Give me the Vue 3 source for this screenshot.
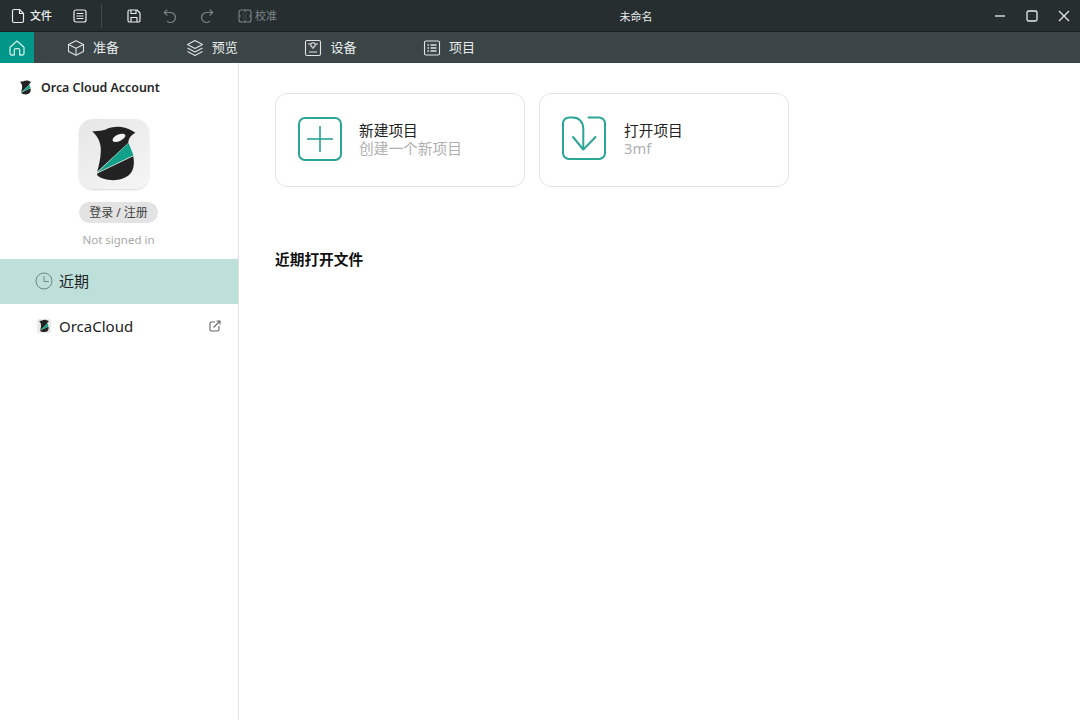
<script setup>
const tabs = [
  { label: '准备', icon: 'cube' },
  { label: '预览', icon: 'layers' },
  { label: '设备', icon: 'device' },
  { label: '项目', icon: 'list' },
]
const orcaTop = 'M277 185 C292 186 305 184 318 180 C330 172 350 170 365 172 C380 174 395 180 408 190 C396 196 388 204 386 221 L292 308 C297 290 303 265 303 245 C304 222 296 202 277 185Z'
const orcaBand = 'M387 221 L402 258 L292 311Z'
const orcaLow = 'M292 313 L401 261 C405 280 404 300 392 314 C378 330 350 336 325 332 C310 329 298 324 292 318Z'
</script>

<template>
  <div class="app">
    <header class="titlebar">
      <div class="tb-left">
        <svg class="ic file-ic" width="16" height="16" viewBox="0 0 16 16" fill="none" stroke="#e8ecec" stroke-width="1.2" stroke-linejoin="round"><path d="M2.5 3a1.5 1.5 0 0 1 1.5-1.5h5.5L13.5 5.500v7.500a1.500 1.500 0 0 1-1.500 1.500H4A1.500 1.500 0 0 1 2.500 13z"/><path d="M9.500 1.500v4h4"/></svg>
        <span class="file-txt">文件</span>
        <svg class="ic menu-ic" width="16" height="16" viewBox="0 0 16 16" fill="none" stroke="#e8ecec" stroke-width="1.2"><rect x="2" y="2" width="12" height="12" rx="2"/><path d="M4.500 5.500h7M4.500 8h7M4.500 10.500h7"/></svg>
        <i class="vsep"></i>
        <svg class="ic save-ic" width="16" height="16" viewBox="0 0 16 16" fill="none" stroke="#e8ecec" stroke-width="1.200" stroke-linejoin="round"><path d="M2 3.500A1.500 1.500 0 0 1 3.500 2h7.500L14 5v7.500a1.500 1.500 0 0 1-1.500 1.500h-9A1.500 1.500 0 0 1 2 12.500z"/><path d="M5 2v3.500h5V2M5 14v-4.500h6V14"/></svg>
        <svg class="ic undo-ic" width="16" height="16" viewBox="0 0 16 16" fill="none" stroke="#7c8486" stroke-width="1.200" stroke-linecap="round" stroke-linejoin="round"><path d="M2.500 4.500h6.500a5 5 0 1 1-3.500 9"/><path d="M5 1.800 2.300 4.500 5 7.200"/></svg>
        <svg class="ic redo-ic" width="16" height="16" viewBox="0 0 16 16" fill="none" stroke="#7c8486" stroke-width="1.200" stroke-linecap="round" stroke-linejoin="round"><path d="M13.500 4.500H7a5 5 0 1 0 3.500 9"/><path d="M11 1.800l2.700 2.700L11 7.200"/></svg>
        <svg class="ic cal-ic" width="14" height="14" viewBox="0 0 14 14" fill="none" stroke="#7c8486" stroke-width="1.100"><rect x="1" y="1" width="12" height="12" rx="2"/><path d="M7 1v2M7 11v2M1 7h2M11 7h2M5 5h.8M8.200 5H9M5 9h.8M8.200 9H9M7 6.500v1"/></svg>
        <span class="cal-txt">校准</span>
      </div>
      <div class="tb-title">未命名</div>
      <div class="tb-right">
        <svg width="12" height="12" viewBox="0 0 12 12" fill="none" stroke="#e8ecec" stroke-width="1.300"><path d="M1 6h10"/></svg>
        <svg width="12" height="12" viewBox="0 0 12 12" fill="none" stroke="#e8ecec" stroke-width="1.300"><rect x="1" y="1" width="10" height="10" rx="1.500"/></svg>
        <svg width="12" height="12" viewBox="0 0 12 12" fill="none" stroke="#e8ecec" stroke-width="1.200"><path d="M1 1l10 10M11 1 1 11"/></svg>
      </div>
    </header>

    <nav class="tabbar">
      <div class="home">
        <svg width="18" height="18" viewBox="0 0 18 18" fill="none" stroke="#cfeee8" stroke-width="1.300" stroke-linejoin="round"><path d="M2 8.300 9 2l7 6.300V14.500A1.500 1.500 0 0 1 14.500 16h-2.800v-5a1.300 1.300 0 0 0-1.300-1.300H7.600A1.300 1.300 0 0 0 6.300 11v5H3.500A1.500 1.500 0 0 1 2 14.500z"/></svg>
      </div>
      <div v-for="t in tabs" :key="t.label" class="tab">
        <svg width="18" height="18" viewBox="0 0 18 18" fill="none" stroke="#dfe3e3" stroke-width="1.100" stroke-linejoin="round">
          <template v-if="t.icon === 'cube'">
            <path d="M9 1.800 16.500 5.500v7L9 16.200 1.500 12.500v-7z"/><path d="M1.500 5.500 9 9.200l7.500-3.700M9 9.200v7"/>
          </template>
          <template v-else-if="t.icon === 'layers'">
            <path d="M9 1.500 16.500 5.500 9 9.500 1.500 5.500z"/><path d="M1.500 9 9 13l7.500-4M1.500 12.500 9 16.500l7.500-4"/>
          </template>
          <template v-else-if="t.icon === 'device'">
            <rect x="1.500" y="1.500" width="15" height="15" rx="1.500"/><circle cx="9" cy="6" r="2.200"/><path d="M4 5h2.800M11.200 5H14M9 8.200v1.800M5 13h8"/>
          </template>
          <template v-else>
            <rect x="1.500" y="2" width="15" height="14" rx="1.500"/><path stroke-width="1.400" d="M4.500 6h1.500M7.500 6h6M4.500 9h1.500M7.500 9h6M4.500 12h1.500M7.500 12h6"/>
          </template>
        </svg>
        <span class="tab-label">{{ t.label }}</span>
      </div>
    </nav>

    <div class="body">
      <aside class="side">
        <div class="acct">
          <svg class="orca-s" width="13" height="15" viewBox="270 165 145 175">
            <path :d="orcaTop" fill="#222"/><path :d="orcaBand" fill="#12a088"/><path :d="orcaLow" fill="#222"/>
          </svg>
          <span>Orca Cloud Account</span>
        </div>
        <div class="avatar">
          <svg width="70" height="70" viewBox="237 148 212 212">
            <path :d="orcaTop" fill="#222"/>
            <ellipse cx="358" cy="205" rx="21" ry="10" transform="rotate(-25 358 205)" fill="#f4f4f4"/>
            <path :d="orcaBand" fill="#12a088"/>
            <path :d="orcaLow" fill="#222"/>
          </svg>
        </div>
        <button class="login">登录 / 注册</button>
        <div class="status">Not signed in</div>
        <div class="item active">
          <svg width="18" height="18" viewBox="0 0 18 18" fill="none" stroke="#6f8a86" stroke-width="1"><circle cx="9" cy="9" r="8"/><path d="M9 4v5.500h5"/></svg>
          <span>近期</span>
        </div>
        <div class="item">
          <svg class="mini" width="14" height="14" viewBox="250 160 185 185">
            <rect x="250" y="160" width="185" height="185" rx="34" fill="#e9e9e9"/>
            <path :d="orcaTop" fill="#222"/><path :d="orcaBand" fill="#12a088"/><path :d="orcaLow" fill="#222"/>
          </svg>
          <span>OrcaCloud</span>
          <svg class="ext" width="12" height="12" viewBox="0 0 12 12" fill="none" stroke="#666" stroke-width="1.100"><path d="M6 2H2.500A1.500 1.500 0 0 0 1 3.500v6A1.500 1.500 0 0 0 2.500 11h6A1.500 1.500 0 0 0 10 9.500V6"/><path d="M4.500 7.500 11 1M7.500 1H11v3.500"/></svg>
        </div>
      </aside>

      <main class="main">
        <div class="cards">
          <div class="card">
            <svg class="big" width="46" height="46" viewBox="0 0 46 46" fill="none" stroke="#2aa596" stroke-width="2"><rect x="2" y="2" width="42" height="42" rx="6"/><path stroke="#1f9a8b" stroke-width="1.500" d="M23 10v26M10 23h26"/></svg>
            <div class="txt"><div class="t1">新建项目</div><div class="t2">创建一个新项目</div></div>
          </div>
          <div class="card open">
            <svg class="big" width="46" height="46" viewBox="0 0 46 46" fill="none" stroke="#2aa596" stroke-width="2" stroke-linecap="round" stroke-linejoin="round"><path d="M27.500 1.500H38a6 6 0 0 1 6 6V37a6 6 0 0 1-6 6H8a6 6 0 0 1-6-6V7.500a6 6 0 0 1 6-6h4C18 1.500 22.300 6 22.300 13v20"/><path d="M12 21l10.300 12.500L34.500 21"/></svg>
            <div class="txt"><div class="t1">打开项目</div><div class="t2">3mf</div></div>
          </div>
        </div>
        <h2 class="recent">近期打开文件</h2>
      </main>
    </div>
  </div>
</template>

<style>
html, body { margin: 0; padding: 0; background: #fff; }
</style>

<style scoped>
.app {
  width: 1080px;
  height: 720px;
  display: flex;
  flex-direction: column;
  overflow: hidden;
  background: #fff;
  font-family: "Noto Sans", "Noto Sans CJK SC", sans-serif;
  color: #222;
}
.titlebar {
  height: 31px;
  flex: none;
  display: flex;
  align-items: center;
  background: #262e30;
  border-bottom: 1px solid #1a1f20;
  border-top: 1px solid #1e2425;
  box-sizing: content-box;
  margin-top: -1px;
}
.tb-left { width: 287px; flex: none; display: flex; align-items: center; box-sizing: border-box; padding-left: 10px; }
.file-txt { font-size: 11px; color: #eef0f0; margin: -2px 0 0 4px; font-weight: 500; }
.menu-ic { margin-left: 20px; }
.vsep { width: 1px; height: 24px; background: #434b4d; margin-left: 13px; }
.save-ic { margin-left: 24px; }
.undo-ic { margin-left: 20px; }
.redo-ic { margin-left: 21px; }
.cal-ic { margin-left: 23px; }
.cal-txt { font-size: 11px; color: #7c8486; margin: -2px 0 0 3px; }
.tb-title { flex: 1; text-align: center; font-size: 11px; color: #e8ecec; }
.tb-right { width: 95px; flex: none; display: flex; align-items: center; gap: 20px; box-sizing: border-box; padding-left: 9px; }
.tabbar {
  height: 31px;
  flex: none;
  display: flex;
  background: #3b4446;
}
.home { width: 34px; display: flex; align-items: center; justify-content: center; background: #009688; }
.tab {
  width: 118.700px;
  flex: none;
  display: flex;
  align-items: center;
  box-sizing: border-box;
  padding-left: 33px;
  gap: 8px;
  color: #e8ecec;
  font-size: 13px;
}
.tab-label { margin-top: -2px; }
.body { flex: 1; display: flex; min-height: 0; }
.side {
  width: 239px;
  flex: none;
  box-sizing: border-box;
  border-right: 1px solid #e2e2e2;
  display: flex;
  flex-direction: column;
}
.acct {
  display: flex;
  align-items: center;
  gap: 9px;
  padding: 16px 0 0 19px;
  font-size: 12.400px;
  font-weight: 600;
  color: #262626;
  height: 32px;
  box-sizing: border-box;
}
.avatar {
  width: 70px;
  height: 70px;
  margin: 24px 0 0 79px;
  border-radius: 14px;
  background: linear-gradient(145deg, #e6e6e6, #f6f6f6);
  box-shadow: 0 1px 2px rgba(0,0,0,.16);
}
.avatar svg { display: block; }
.login {
  display: block;
  width: 79px;
  height: 21px;
  margin: 13px 0 0 79px;
  padding: 0 0 2px;
  border: 0;
  border-radius: 11px;
  background: #e3e3e3;
  color: #444;
  font: inherit;
  font-size: 12px;
}
.status { margin-top: 8px; padding-right: 1px; text-align: center; font-size: 11.500px; line-height: 18px; color: #a8a8a8; }
.item {
  height: 45px;
  flex: none;
  box-sizing: border-box;
  display: flex;
  align-items: center;
  padding: 0 0 2px 35px;
  gap: 6px;
  font-size: 15px;
  color: #222;
}
.status + .item { margin-top: 10px; }
.active { background: #bde0da; }
.mini { margin-left: 2px; margin-right: 2px; }
.ext { margin-left: auto; margin-right: 17px; }
.main { flex: 1; padding: 30px 0 0 36px; min-width: 0; }
.cards { display: flex; gap: 14px; }
.card {
  width: 250px;
  height: 94px;
  box-sizing: border-box;
  border: 1px solid #e4e4e4;
  border-radius: 12px;
  display: flex;
  align-items: center;
  padding-left: 21px;
  gap: 16px;
}
.open { gap: 17px; }
.big { flex: none; margin-top: -3px; }
.txt { line-height: 18px; font-size: 14.700px; margin-top: -2px; }
.t1 { color: #222; }
.t2 { color: #b0b0b0; }
.recent { margin: 62px 0 0; font-size: 14.700px; line-height: 20px; font-weight: 700; color: #111; }
</style>
